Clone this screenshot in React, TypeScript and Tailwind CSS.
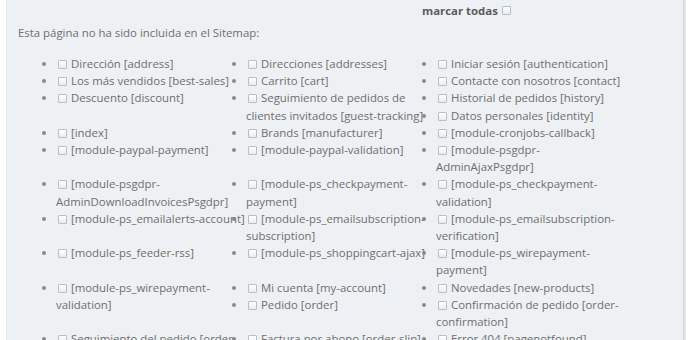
import React from 'react';

// Pages that are not in the sitemap. Wrapped items carry their line break
// explicitly so the float rows come out the same as the reference.
const pages: string[][] = [
  ['Dirección [address]'],
  ['Direcciones [addresses]'],
  ['Iniciar sesión [authentication]'],
  ['Los más vendidos [best-sales]'],
  ['Carrito [cart]'],
  ['Contacte con nosotros [contact]'],
  ['Descuento [discount]'],
  ['Seguimiento de pedidos de', 'clientes invitados [guest-tracking]'],
  ['Historial de pedidos [history]'],
  ['Datos personales [identity]'],
  ['[index]'],
  ['Brands [manufacturer]'],
  ['[module-cronjobs-callback]'],
  ['[module-paypal-payment]'],
  ['[module-paypal-validation]'],
  ['[module-psgdpr-', 'AdminAjaxPsgdpr]'],
  ['[module-psgdpr-', 'AdminDownloadInvoicesPsgdpr]'],
  ['[module-ps_checkpayment-', 'payment]'],
  ['[module-ps_checkpayment-', 'validation]'],
  ['[module-ps_emailalerts-account]'],
  ['[module-ps_emailsubscription-', 'subscription]'],
  ['[module-ps_emailsubscription-', 'verification]'],
  ['[module-ps_feeder-rss]'],
  ['[module-ps_shoppingcart-ajax]'],
  ['[module-ps_wirepayment-', 'payment]'],
  ['[module-ps_wirepayment-', 'validation]'],
  ['Mi cuenta [my-account]'],
  ['Novedades [new-products]'],
  ['Pedido [order]'],
  ['Confirmación de pedido [order-', 'confirmation]'],
  ['Seguimiento del pedido [order-', 'follow]'],
  ['Factura por abono [order-slip]'],
  ['Error 404 [pagenotfound]'],
];

function Box() {
  return (
    <span className="inline-block h-[9px] w-[9px] rounded-[1px] border border-[#b8bec3] bg-gradient-to-b from-white to-[#e9ecee] align-[-1px]" />
  );
}

export default function App() {
  return (
    <div
      className="h-[340px] w-[700px] overflow-hidden bg-white text-[11.4px] leading-[17.2px] text-[#6e6e6e]"
      style={{ fontFamily: '"Open Sans", "Noto Sans", sans-serif' }}
    >
      <div className="ml-[6px] h-full w-[678px] border-l border-r border-l-[#e6eaed] border-r-[#cdd5db] bg-[#edf1f4] px-[11px] pt-[1.5px] shadow-[2px_0_0_#e3e8ec]">
        {/* select all */}
        <div className="flex items-center gap-[4px] pl-[404px]">
          <span className="font-bold text-[#5c5c5c]">marcar todas</span>
          <Box />
        </div>

        <p className="mt-[5px]">Esta página no ha sido incluida en el Sitemap:</p>

        <ul className="mt-[14px] pl-[38px]">
          {pages.map((lines, i) => (
            <li key={i} className="relative float-left w-[190px] whitespace-nowrap">
              <span className="absolute left-[-14px] top-[7px] h-[4px] w-[4px] rounded-full bg-[#8a8a8a]" />
              <span className="ml-[2px] mr-[4px]">
                <Box />
              </span>
              {lines.map((l, j) => (
                <React.Fragment key={j}>
                  {j > 0 && <br />}
                  {l}
                </React.Fragment>
              ))}
            </li>
          ))}
        </ul>
      </div>
    </div>
  );
}
